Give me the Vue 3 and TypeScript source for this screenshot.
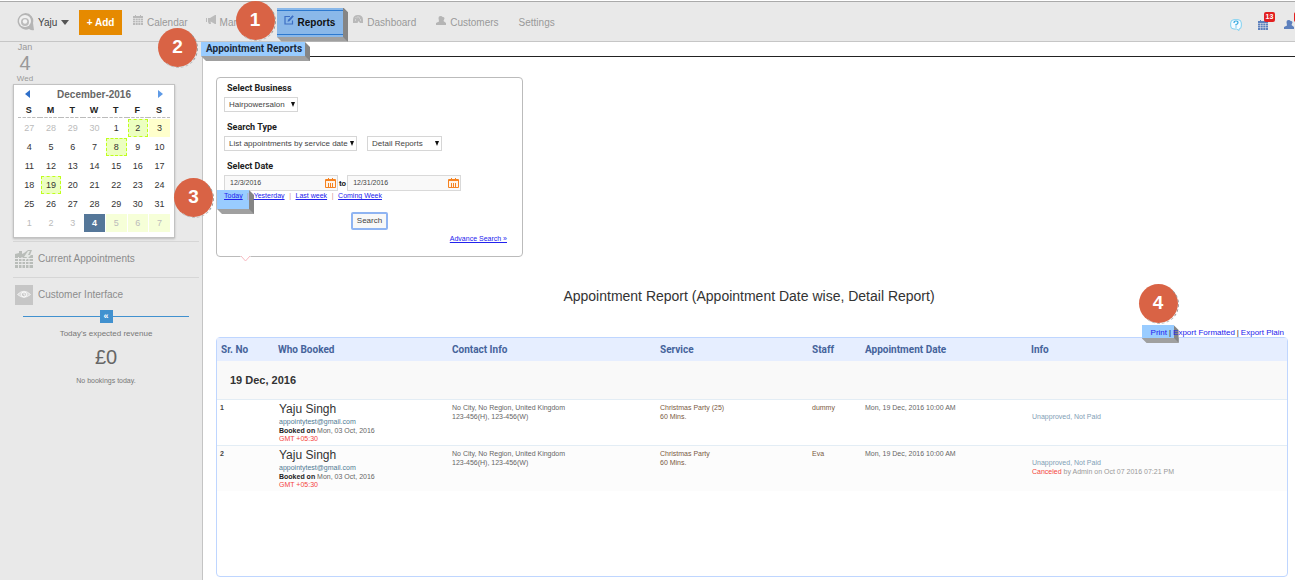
<script setup lang="ts">
import { ref } from 'vue'

interface Day {
  n: number
  kind?: 'muted' | 'booked' | 'today' | 'selected' | 'soft'
}

const toDays = (start: number): Day[] => Array.from({ length: 7 }, (_, i) => ({ n: start + i }))

const weeks: Day[][] = [
  [
    { n: 27, kind: 'muted' }, { n: 28, kind: 'muted' }, { n: 29, kind: 'muted' }, { n: 30, kind: 'muted' },
    { n: 1 }, { n: 2, kind: 'booked' }, { n: 3, kind: 'today' },
  ],
  toDays(4).map((d): Day => (d.n === 8 ? { n: 8, kind: 'booked' } : d)),
  toDays(11),
  toDays(18).map((d): Day => (d.n === 19 ? { n: 19, kind: 'booked' } : d)),
  toDays(25),
  [
    { n: 1, kind: 'muted' }, { n: 2, kind: 'muted' }, { n: 3, kind: 'muted' }, { n: 4, kind: 'selected' },
    { n: 5, kind: 'soft' }, { n: 6, kind: 'soft' }, { n: 7, kind: 'soft' },
  ],
]
const weekdays = ['S', 'M', 'T', 'W', 'T', 'F', 'S']

const business = ref('Hairpowersalon')
const searchType = ref('List appointments by service date')
const reportType = ref('Detail Reports')
const fromDate = ref('12/3/2016')
const toDate = ref('12/31/2016')

const columns = ['Sr. No', 'Who Booked', 'Contact Info', 'Service', 'Staff', 'Appointment Date', 'Info']
const rows = [
  { id: 1, service: 'Christmas Party (25)', staff: 'dummy', canceled: '' },
  { id: 2, service: 'Christmas Party', staff: 'Eva', canceled: 'by Admin on Oct 07 2016 07:21 PM' },
]
</script>

<template>
  <div class="page">
    <header class="topbar">
      <button class="account" type="button">
        <svg width="17" height="18" viewBox="0 0 17 18">
          <path d="M8.500 0A8 8 0 0 1 16 10l1 7q-2 1-5-1A8.300 8.300 0 1 1 8.500 0z" fill="#b5b5b5" />
          <circle cx="8" cy="8" r="6" fill="#f0f0f0" />
          <circle cx="8" cy="9" r="4" fill="#bcbcbc" />
          <circle cx="8" cy="8.500" r="2.200" fill="#f3f3f3" />
        </svg>
        <span>Yaju</span>
        <svg width="8" height="5" viewBox="0 0 8 5"><path d="M0 0h8L4 5z" fill="#555" /></svg>
      </button>
      <button class="add" type="button">+ Add</button>
      <nav class="nav">
        <a href="#calendar" class="item">
          <svg class="raised" width="10" height="10" viewBox="0 0 10 10">
            <path d="M0 1h10v9H0zM2 0h1v2H2zM7 0h1v2H7z" fill="#b9b9b9" />
            <path d="M0 3.500h10M0 5.500h10M0 7.500h10M2.500 3v7M5 3v7M7.500 3v7" stroke="#e9e9e9" stroke-width=".6" />
          </svg>
          <span>Calendar</span>
        </a>
        <a href="#marketing" class="item">
          <svg class="raised" width="10" height="10" viewBox="0 0 10 10">
            <path d="M0 3h1v4H0zM2 3h2l5-3h1v9H9L4.500 6.500 5 9H3L2 7z" fill="#bbb" />
          </svg>
          <span>Marketing</span>
        </a>
        <a href="#reports" class="item active block3d">
          <svg class="raised" width="10" height="10" viewBox="0 0 10 10">
            <path d="M6 1.500H1v7.500h7.500V5.500" fill="none" stroke="#3d6fc4" stroke-width="1.200" />
            <path d="M3.500 6.800l.6-2L8.500.3l1.300 1.200L5.400 6.200z" fill="#3d6fc4" />
          </svg>
          <span>Reports</span>
          <b class="step step-1">1</b>
        </a>
        <a href="#dashboard" class="item after-active">
          <svg class="raised" width="10" height="10" viewBox="0 0 10 10">
            <path d="M0 8V5q0-5 5-5t5 5v3H7L5.500 6 4.500 8z" fill="#b9b9b9" />
            <path d="M2 5h1M3 2.500l.7.7M5 1.500v1M7 2.500l-.7.7M8 5H7" stroke="#eee" />
          </svg>
          <span>Dashboard</span>
        </a>
        <a href="#customers" class="item">
          <svg class="raised" width="10" height="9" viewBox="0 0 10 9">
            <path d="M2.500 2q0-2 2-2t2 1q2-.5 2 1.500L7.500 5 10 7v2H0V7l3-1.500z" fill="#b5b5b5" />
          </svg>
          <span>Customers</span>
        </a>
        <a href="#settings" class="item"><span>Settings</span></a>
      </nav>
      <div class="tools">
        <a href="#help" class="tool" aria-label="Help">
          <svg width="12" height="12" viewBox="0 0 12 12">
            <path d="M4 .7h4Q11.300.7 11.300 4v3q0 3-2.300 3v1.500L6.500 10H4Q.7 10 .7 7V4Q.7.7 4 .7z" fill="#f4fbff" stroke="#7fd0f0" />
            <path d="M4 4q0-2 2-2t2 1.700Q8 5 6 5.500v1M6 7.500v1" fill="none" stroke="#35a9df" stroke-width="1.200" />
          </svg>
        </a>
        <a href="#bookings" class="tool" aria-label="Bookings">
          <svg width="10" height="10" viewBox="0 0 10 10">
            <path d="M0 1h10v9H0zM2 0h1v2H2zM7 0h1v2H7z" fill="#5d80bd" />
            <path d="M0 3.500h10M0 5.500h10M0 7.500h10M2.500 3v7M5 3v7M7.500 3v7" stroke="#e9e9e9" stroke-width=".5" />
          </svg>
          <b class="count">13</b>
        </a>
        <a href="#people" class="tool" aria-label="People">
          <svg width="10" height="9" viewBox="0 0 10 9">
            <path d="M2.500 2q0-2 2-2t2 1q2-.5 2 1.500L7.500 5 10 7v2H0V7l3-1.500z" fill="#5d80bd" />
          </svg>
          <b class="count count-edge"></b>
        </a>
      </div>
    </header>

    <div class="body">
      <aside class="side">
        <div class="now">
          <span class="month">Jan</span>
          <span class="date">4</span>
          <span class="wday">Wed</span>
        </div>

        <section class="cal">
          <div class="cal-head">
            <button type="button" aria-label="Previous month">
              <svg width="5" height="8" viewBox="0 0 5 8"><path d="M5 0v8L0 4z" fill="#2f6fc9" /></svg>
            </button>
            <strong>December-2016</strong>
            <button type="button" aria-label="Next month">
              <svg width="5" height="8" viewBox="0 0 5 8"><path d="M0 0v8l5-4z" fill="#5e9ae6" /></svg>
            </button>
          </div>
          <table class="days">
            <thead>
              <tr><th v-for="(w, i) in weekdays" :key="i">{{ w }}</th></tr>
            </thead>
            <tbody>
              <tr v-for="(week, i) in weeks" :key="i">
                <td v-for="d in week" :key="d.n"><span class="day" :class="d.kind">{{ d.n }}</span></td>
              </tr>
            </tbody>
          </table>
        </section>

        <a href="#current" class="side-link">
          <svg width="18" height="18" viewBox="0 0 18 18">
            <path d="M0 4l4-1V1h3v3l2-1 4-3h4l-2 5h3v13H0z" fill="#b9bdb9" />
            <path d="M0 8.500h18M0 11.500h18M0 14.500h18M3.500 7v11M7 7v11M10.500 8v10M14 8v10" stroke="#e9e9e9" />
            <path d="M13 1l-4 6h3l-2 4 6-6h-3l2-4z" fill="#e4e7e4" />
          </svg>
          <span>Current Appointments</span>
        </a>
        <a href="#interface" class="side-link">
          <svg width="18" height="20" viewBox="0 0 18 20">
            <path d="M0 0h18v20H0z" fill="#c6c6c6" />
            <path d="M2.500 9.500Q9 3 15.500 9.500 9 15 2.500 9.500z" fill="#ddd" stroke="#efefef" />
            <circle cx="9" cy="9.500" r="2.500" fill="#c6c6c6" stroke="#fff" />
            <path d="M9 8v2h1.500" fill="none" stroke="#fff" stroke-width=".8" />
          </svg>
          <span>Customer Interface</span>
        </a>

        <div class="divider"><button type="button" aria-label="Collapse">«</button></div>
        <div class="revenue">
          <p>Today's expected revenue</p>
          <p class="amount">£0</p>
          <p class="none">No bookings today.</p>
        </div>
      </aside>

      <main class="main">
        <div class="subhead">
          <h1 class="block3d">Appointment Reports<b class="step step-2">2</b></h1>
        </div>

        <form class="filter" @submit.prevent>
          <label for="business">Select Business</label>
          <div class="line">
            <span class="pick">
              <select id="business" v-model="business" class="w-business"><option>Hairpowersalon</option></select>
            </span>
          </div>
          <label for="type">Search Type</label>
          <div class="line">
            <span class="pick">
              <select id="type" v-model="searchType" class="w-type"><option>List appointments by service date</option></select>
            </span>
            <span class="pick">
              <select v-model="reportType" class="w-report" aria-label="Report type"><option>Detail Reports</option></select>
            </span>
          </div>
          <label for="from">Select Date</label>
          <div class="dates">
            <span class="datebox">
              <input id="from" v-model="fromDate" type="text" />
              <svg width="11" height="10" viewBox="0 0 11 10">
                <path d="M.5 1.500h10v8H.5z" fill="#fff3e6" stroke="#f58220" />
                <path d="M1 2.500h9M3.500 0v2M7.500 0v2M3.500 5v4M5.500 5v4M7.500 5v4" stroke="#f58220" />
              </svg>
            </span>
            <label for="to" class="to">to</label>
            <span class="datebox">
              <input id="to" v-model="toDate" type="text" />
              <svg width="11" height="10" viewBox="0 0 11 10">
                <path d="M.5 1.500h10v8H.5z" fill="#fff3e6" stroke="#f58220" />
                <path d="M1 2.500h9M3.500 0v2M7.500 0v2M3.500 5v4M5.500 5v4M7.500 5v4" stroke="#f58220" />
              </svg>
            </span>
          </div>
          <div class="quick">
            <span class="today-wrap">
              <i class="today-block block3d"></i>
              <a href="#today">Today</a>
              <b class="step step-3">3</b>
            </span>
            <span class="bar">|</span><a href="#yesterday">Yesterday</a>
            <span class="bar">|</span><a href="#last-week">Last week</a>
            <span class="bar">|</span><a href="#coming-week">Coming Week</a>
          </div>
          <button class="search" type="submit">Search</button>
          <a href="#advance" class="advance">Advance Search »</a>
          <svg class="notch" width="11" height="6" viewBox="0 0 11 6">
            <path d="M0 0h11L5.500 5z" fill="#fff" />
            <path d="M1 0l4.500 5L10 0" fill="none" stroke="#f7b9c0" />
          </svg>
        </form>

        <h2>Appointment Report (Appointment Date wise, Detail Report)</h2>

        <div class="exports">
          <span class="print-wrap">
            <i class="print-block block3d"></i>
            <a href="#print">Print</a>
            <b class="step step-4">4</b>
          </span>
          <span class="pipe">|</span><a href="#formatted">Export Formatted</a>
          <span class="pipe">|</span><a href="#plain">Export Plain</a>
        </div>

        <div class="panel">
          <table class="report">
            <colgroup>
              <col class="c1" /><col class="c2" /><col class="c3" /><col class="c4" /><col class="c5" /><col class="c6" /><col />
            </colgroup>
            <thead>
              <tr><th v-for="c in columns" :key="c">{{ c }}</th></tr>
            </thead>
            <tbody>
              <tr class="group"><td colspan="7">19 Dec, 2016</td></tr>
              <tr v-for="r in rows" :key="r.id" class="entry">
                <td class="num">{{ r.id }}</td>
                <td class="who">
                  <span class="name">Yaju Singh</span>
                  <span class="mail">appointytest@gmail.com</span>
                  <span><b>Booked on</b> Mon, 03 Oct, 2016</span>
                  <span class="red">GMT +05:30</span>
                </td>
                <td>No City, No Region, United Kingdom<br />123-456(H), 123-456(W)</td>
                <td class="brown">{{ r.service }}<br />60 Mins.</td>
                <td class="brown">{{ r.staff }}</td>
                <td>Mon, 19 Dec, 2016 10:00 AM</td>
                <td class="info">
                  <span class="status">Unapproved, Not Paid</span>
                  <span v-if="r.canceled"><em>Canceled</em> {{ r.canceled }}</span>
                </td>
              </tr>
            </tbody>
          </table>
        </div>
      </main>
    </div>
  </div>
</template>

<style>
body {
  background: #fff;
  overflow: hidden;
}
</style>

<style scoped>
* {
  box-sizing: border-box;
}
.page {
  display: flex;
  flex-direction: column;
  min-height: 100vh;
  font-family: "Liberation Sans", Arial, sans-serif;
  font-size: 10px;
  color: #333;
  overflow: hidden;
}
a {
  text-decoration: none;
}
button {
  font-family: inherit;
  border: 0;
  padding: 0;
  background: none;
}
svg {
  display: block;
  flex: none;
}

/* raised blue block with a grey extrusion on its right and bottom sides */
.block3d {
  position: relative;
  background: #99ccff;
}
.block3d::after {
  content: "";
  position: absolute;
  inset: 0 -5px -5px 0;
  border-right: 5px solid #858585;
  border-bottom: 5px solid #a0a0a0;
  clip-path: polygon(0 0, calc(100% - 5px) 0, 100% 5px, 100% 100%, 5px 100%, 0 calc(100% - 5px));
}
.step {
  position: absolute;
  z-index: 5;
  width: 39px;
  height: 39px;
  border-radius: 50%;
  background: #d96345;
  color: #fff;
  font: bold 19px/38px "Liberation Sans", Arial, sans-serif;
  text-align: center;
}
.step::before {
  content: "";
  position: absolute;
  z-index: -1;
  inset: 1px -1px -1px 1px;
  border-radius: 50%;
  border: 1px dashed;
  border-color: transparent #999 #bbb transparent;
}
.step-1 { left: -41px; top: -7px; }
.step-2 { left: -43px; top: -14px; }
.step-3 { left: -50px; top: -13px; }
.step-4 { left: -12px; top: -44px; }

.topbar {
  display: flex;
  align-items: center;
  height: 42px;
  padding: 2px 0 0 17px;
  background: #e9e9e9;
  border-top: 1px solid #fff;
  border-bottom: 1px solid #c6c6c6;
  box-shadow: inset 0 1px 0 #aaa;
}
.account {
  display: flex;
  align-items: center;
  gap: 4px;
  width: 62px;
  font-size: 10px;
  color: #444;
}
.add {
  width: 43px;
  height: 25px;
  margin-right: 2px;
  background: #e68a00;
  color: #fff;
  font-size: 10px;
  font-weight: bold;
}
.nav {
  display: flex;
  align-items: center;
  height: 100%;
}
.item {
  display: flex;
  align-items: center;
  gap: 4px;
  padding: 0 9px;
  color: #999;
}
.raised {
  margin-bottom: 4px;
}
.item.active {
  height: 29px;
  margin-left: 4px;
  padding: 0 8px 0 7px;
  background: #8ab8e9;
  color: #111;
  font-weight: bold;
}
.item.active::before {
  content: "";
  position: absolute;
  inset: 2px 0;
  border-top: 1px solid #2d79cf;
  border-bottom: 1px solid #2d79cf;
}
.after-active {
  margin-left: 1px;
}
.after-active ~ .item {
  padding-left: 11px;
}
.tools {
  display: flex;
  align-items: center;
  gap: 16px;
  margin-left: auto;
  padding: 5px 1px 0 0;
}
.tool {
  position: relative;
}
.count {
  position: absolute;
  left: 6px;
  top: -8px;
  width: 11px;
  height: 10px;
  border-radius: 2px;
  background: #e22020;
  color: #fff;
  font-size: 7px;
  line-height: 10px;
  text-align: center;
}
.count-edge {
  left: 10px;
}

.body {
  flex: 1;
  display: flex;
}
.side {
  flex: none;
  width: 203px;
  padding-left: 13px;
  background: #e9e9e9;
  border-right: 1px solid #c4c4c4;
}
.now {
  display: flex;
  flex-direction: column;
  align-items: center;
  width: 24px;
  color: #999;
}
.month {
  line-height: 10px;
  font-size: 9px;
}
.date {
  font-size: 20px;
  line-height: 22px;
}
.wday {
  font-size: 8px;
  line-height: 10px;
}
.cal {
  width: 162px;
  height: 154px;
  padding: 3px 4px;
  background: #fff;
  border: 1px solid #c2c2c2;
  box-shadow: 0 1px 2px #bbb;
}
.cal-head {
  display: flex;
  align-items: center;
  justify-content: space-between;
  height: 12px;
  padding: 0 7px;
  font-size: 10px;
  color: #666;
}
.days {
  width: 100%;
  border-collapse: collapse;
  table-layout: fixed;
  text-align: center;
}
.days th {
  height: 17px;
  padding: 3px 0 0;
  font-size: 9px;
  line-height: 12px;
  color: #222;
  border-bottom: 1px dashed #bbb;
}
.days td {
  height: 19px;
  padding: 1px 0 0 1px;
}
.day {
  display: block;
  height: 18px;
  border: 1px solid transparent;
  font-size: 9px;
  line-height: 16px;
  color: #333;
}
.day.muted {
  color: #bbb;
}
.day.booked {
  background: #ecffc0;
  border: 1px dashed #bfff1c;
}
.day.today {
  background: #ffffcc;
}
.day.selected {
  background: #557799;
  color: #fff;
  font-weight: bold;
}
.day.soft {
  background: #f6ffd8;
  color: #bbb;
}
.side-link {
  display: flex;
  align-items: center;
  gap: 5px;
  height: 36px;
  margin-right: 3px;
  padding: 0 0 2px 2px;
  border-top: 1px solid #d6d6d6;
  color: #8c8c8c;
}
.cal + .side-link {
  margin-top: 3px;
}
.divider {
  display: flex;
  justify-content: center;
  align-items: center;
  height: 13px;
  margin: -3px 13px 0 10px;
  background: linear-gradient(#4191cf, #4191cf) center / 100% 1px no-repeat;
}
.divider button {
  width: 13px;
  height: 13px;
  background: #4191cf;
  color: #fff;
  font-size: 9px;
  font-weight: bold;
  line-height: 11px;
}
.revenue {
  padding: 5px 13px 0 10px;
  text-align: center;
  font-size: 8px;
  color: #777;
}
.revenue p {
  margin: 0;
  line-height: 11px;
}
.revenue .amount {
  font-size: 20px;
  line-height: 36px;
  color: #666;
}
.revenue .none {
  font-size: 7px;
}

.main {
  flex: 1;
  min-width: 0;
  display: flex;
  flex-direction: column;
}
.subhead {
  display: flex;
  height: 15px;
  margin-left: 2px;
  border-bottom: 1px solid #222;
}
h1 {
  height: 14px;
  margin: 0 0 0 -4px;
  padding: 0 0 0 5px;
  width: 104px;
  font: bold 10px/13px Roboto, "Liberation Sans", sans-serif;
  color: #1c2a3a;
  white-space: nowrap;
}
.filter {
  position: relative;
  display: flex;
  flex-direction: column;
  width: 307px;
  margin: 20px 0 0 13px;
  padding: 5px 7px 12px;
  border: 1px solid #bbb;
  border-radius: 4px;
}
.filter label {
  padding-left: 3px;
  font: bold 9px/11px Roboto, "Liberation Sans", sans-serif;
  color: #222;
}
.line {
  display: flex;
  gap: 10px;
  margin: 3px 0 10px;
}
.pick {
  position: relative;
}
.pick::after {
  content: "";
  position: absolute;
  right: 3px;
  top: 5px;
  border: solid transparent;
  border-width: 5px 2px 0;
  border-top-color: #111;
}
select {
  appearance: none;
  display: block;
  height: 15px;
  padding: 0 4px;
  border: 1px solid #d6d6d6;
  border-radius: 0;
  background: #fff;
  color: #444;
  font: 8px/13px "Liberation Sans", Arial, sans-serif;
}
.w-business { width: 74px; }
.w-type { width: 133px; }
.w-report { width: 75px; }
.dates {
  display: flex;
  align-items: center;
  margin-top: 3px;
}
.datebox {
  display: flex;
  align-items: center;
  width: 114px;
  height: 16px;
  padding-right: 1px;
  border: 1px solid #d9d9d9;
  background: #f9f9f9;
}
.datebox input {
  flex: 1;
  min-width: 0;
  height: 14px;
  padding: 0 5px;
  border: 0;
  background: none;
  color: #444;
  font: 7px/14px "Liberation Sans", Arial, sans-serif;
}
.dates .to {
  padding: 0 1px;
  font-size: 8px;
}
.quick {
  display: flex;
  height: 9px;
  font-size: 7px;
  line-height: 9px;
}
.quick a,
.advance {
  color: #2222ee;
  text-decoration: underline;
}
.bar {
  width: 11px;
  text-align: center;
  color: #d09090;
}
.today-wrap,
.print-wrap {
  position: relative;
}
/* keeps the link texts above the raised blocks */
.quick a,
.bar,
.exports a,
.pipe {
  position: relative;
  z-index: 1;
}
.today-block,
.print-block {
  position: absolute;
}
.today-block {
  left: -7px;
  top: -1px;
  width: 32px;
  height: 19px;
}
.print-block {
  left: -9px;
  top: -3px;
  width: 32px;
  height: 13px;
}
.search {
  align-self: center;
  width: 37px;
  height: 18px;
  margin: 12px 0 4px;
  border: 2px solid #8fb4f2;
  border-radius: 2px;
  background: #f8f8f8;
  color: #444;
  font-size: 8px;
  line-height: 12px;
}
.advance {
  align-self: flex-end;
  margin: 0 8px 1px 0;
  font-size: 7px;
  line-height: 9px;
}
.notch {
  position: absolute;
  left: 23px;
  bottom: -6px;
}
h2 {
  margin: 30px 0 0;
  font-size: 14px;
  font-weight: normal;
  line-height: 18px;
  text-align: center;
  color: #333;
}
.exports {
  display: flex;
  justify-content: flex-end;
  margin: 23px 11px 0 0;
  font-size: 8px;
  line-height: 9px;
}
.exports a {
  color: #2222ee;
}
.pipe {
  width: 6px;
  text-align: center;
  color: #222;
}
.panel {
  flex: 1;
  margin: 0 7px 3px 13px;
  border: 1px solid #bfd6ff;
  border-radius: 4px;
}
.report {
  width: 100%;
  border-collapse: collapse;
  table-layout: fixed;
}
.c1 { width: 57px; }
.c2 { width: 174px; }
.c3 { width: 208px; }
.c4 { width: 152px; }
.c5 { width: 53px; }
.c6 { width: 166px; }
.report th {
  height: 23px;
  padding: 0 4px;
  background: #e6eeff;
  color: #45639b;
  font: bold 10px/12px Roboto, "Liberation Sans", sans-serif;
  text-align: left;
}
.group td {
  height: 38px;
  padding: 0 13px;
  background: #f9f9f9;
  font-size: 11px;
  font-weight: bold;
  color: #333;
}
.entry td {
  height: 46px;
  padding: 3px 4px 0;
  border-top: 1px solid #e3edf5;
  vertical-align: top;
  font-size: 7px;
  line-height: 9px;
  color: #666;
}
.entry:last-child td {
  background: #fcfcfc;
}
.entry .num {
  padding-left: 3px;
  font-weight: bold;
  color: #444;
}
.entry .who {
  padding: 2px 0 0 5px;
}
.who span,
.info span {
  display: block;
}
.who .name {
  font-size: 12px;
  line-height: 15px;
  color: #333;
}
.who .mail {
  color: #4f7a94;
}
.who b {
  color: #222;
}
.who .red,
.info em {
  color: #f4443c;
  font-style: normal;
}
.who .red {
  line-height: 8px;
}
.entry .brown {
  color: #7a5a42;
}
.entry .info {
  padding: 12px 5px 0;
  color: #999;
}
.info .status {
  color: #7f9eb5;
}
</style>
